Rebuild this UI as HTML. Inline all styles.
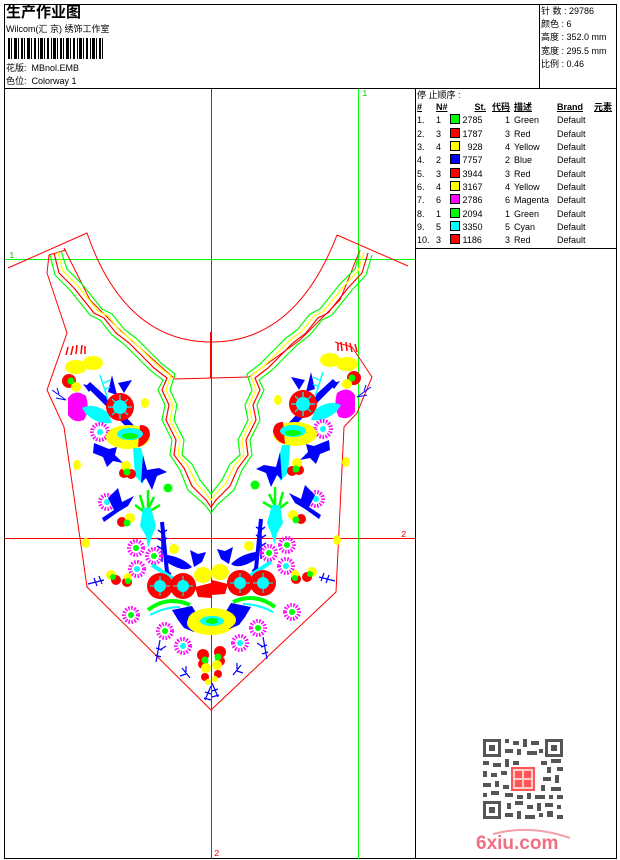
<!DOCTYPE html>
<html><head><meta charset="utf-8"><style>
*{margin:0;padding:0;box-sizing:border-box}
body{width:620px;height:860px;background:#fff;position:relative;overflow:hidden;font-family:"Liberation Sans","Noto Sans CJK SC",sans-serif;color:#000}
.a{position:absolute}
.t{font-size:9px;line-height:12px;white-space:nowrap}
table{border-collapse:collapse;font-size:9px}
td{height:13.3px;line-height:13px;padding:0;white-space:nowrap}
.sw{display:inline-block;width:10px;height:10px;border:1px solid #000;vertical-align:-1px}
</style></head><body>
<div class="a" style="left:4px;top:4px;width:613px;height:855px;border:1px solid #000"></div>
<div class="a" style="left:4px;top:88px;width:613px;border-top:1px solid #000"></div>
<div class="a" style="left:539px;top:4px;height:84px;border-left:1px solid #000"></div>
<div class="a" style="left:415px;top:88px;height:771px;border-left:1px solid #000"></div>
<div class="a" style="left:415px;top:248px;width:202px;border-top:1px solid #000"></div>
<div class="a" style="left:6px;top:3px;font-size:15px;font-weight:bold;line-height:18px;font-family:'WenQuanYi Zen Hei','Noto Sans CJK SC',sans-serif">生产作业图</div>
<div class="a t" style="left:6px;top:23px">Wilcom(汇 京) 绣饰工作室</div>
<svg class="a" style="left:8px;top:38px" width="100" height="21">
<g fill="#000">
<rect x="0" y="0" width="2" height="21"/><rect x="3" y="0" width="1" height="21"/><rect x="6" y="0" width="3" height="21"/><rect x="10" y="0" width="1" height="21"/><rect x="13" y="0" width="2" height="21"/><rect x="16" y="0" width="1" height="21"/><rect x="19" y="0" width="3" height="21"/><rect x="23" y="0" width="1" height="21"/><rect x="26" y="0" width="2" height="21"/><rect x="30" y="0" width="1" height="21"/><rect x="32" y="0" width="3" height="21"/><rect x="36" y="0" width="1" height="21"/><rect x="39" y="0" width="2" height="21"/><rect x="43" y="0" width="1" height="21"/><rect x="45" y="0" width="3" height="21"/><rect x="49" y="0" width="1" height="21"/><rect x="52" y="0" width="2" height="21"/><rect x="55" y="0" width="1" height="21"/><rect x="58" y="0" width="3" height="21"/><rect x="62" y="0" width="1" height="21"/><rect x="65" y="0" width="2" height="21"/><rect x="69" y="0" width="1" height="21"/><rect x="71" y="0" width="3" height="21"/><rect x="75" y="0" width="1" height="21"/><rect x="78" y="0" width="2" height="21"/><rect x="82" y="0" width="1" height="21"/><rect x="84" y="0" width="3" height="21"/><rect x="88" y="0" width="1" height="21"/><rect x="91" y="0" width="2" height="21"/><rect x="94" y="0" width="1" height="21"/>
</g></svg>
<div class="a t" style="left:6px;top:62px">花版:&nbsp; MBnol.EMB</div>
<div class="a t" style="left:6px;top:75px">色位:&nbsp; Colorway 1</div>
<div class="a t" style="left:541px;top:5px;line-height:13.2px">针 数 : 29786<br>颜色 : 6<br>高度 : 352.0 mm<br>宽度 : 295.5 mm<br>比例 : 0.46</div>
<div class="a t" style="left:417px;top:89px">停 止顺序 :</div>
<table class="a" style="left:417px;top:101px">
<tr style="font-weight:bold;text-decoration:underline"><td style="width:19px">#</td><td style="width:14px">N#</td><td style="width:36px;text-align:right">St.</td><td style="width:24px;text-align:right">代码</td><td style="width:47px;padding-left:4px">描述</td><td style="width:35px">Brand</td><td style="padding-left:2px">元素</td></tr>
<tr><td>1.</td><td>1</td><td><span class="sw" style="background:#0f0"></span> 2785</td><td style="text-align:right">1</td><td style="padding-left:4px">Green</td><td>Default</td><td></td></tr>
<tr><td>2.</td><td>3</td><td><span class="sw" style="background:#f00"></span> 1787</td><td style="text-align:right">3</td><td style="padding-left:4px">Red</td><td>Default</td><td></td></tr>
<tr><td>3.</td><td>4</td><td><span class="sw" style="background:#ff0"></span> &nbsp;&nbsp;928</td><td style="text-align:right">4</td><td style="padding-left:4px">Yellow</td><td>Default</td><td></td></tr>
<tr><td>4.</td><td>2</td><td><span class="sw" style="background:#00f"></span> 7757</td><td style="text-align:right">2</td><td style="padding-left:4px">Blue</td><td>Default</td><td></td></tr>
<tr><td>5.</td><td>3</td><td><span class="sw" style="background:#f00"></span> 3944</td><td style="text-align:right">3</td><td style="padding-left:4px">Red</td><td>Default</td><td></td></tr>
<tr><td>6.</td><td>4</td><td><span class="sw" style="background:#ff0"></span> 3167</td><td style="text-align:right">4</td><td style="padding-left:4px">Yellow</td><td>Default</td><td></td></tr>
<tr><td>7.</td><td>6</td><td><span class="sw" style="background:#f0f"></span> 2786</td><td style="text-align:right">6</td><td style="padding-left:4px">Magenta</td><td>Default</td><td></td></tr>
<tr><td>8.</td><td>1</td><td><span class="sw" style="background:#0f0"></span> 2094</td><td style="text-align:right">1</td><td style="padding-left:4px">Green</td><td>Default</td><td></td></tr>
<tr><td>9.</td><td>5</td><td><span class="sw" style="background:#0ff"></span> 3350</td><td style="text-align:right">5</td><td style="padding-left:4px">Cyan</td><td>Default</td><td></td></tr>
<tr><td>10.</td><td>3</td><td><span class="sw" style="background:#f00"></span> 1186</td><td style="text-align:right">3</td><td style="padding-left:4px">Red</td><td>Default</td><td></td></tr>
</table>

<svg class="a" style="left:0;top:0" width="415" height="860" shape-rendering="crispEdges">
<line x1="211.5" y1="89" x2="211.5" y2="859" stroke="#f00"/>
<line x1="5" y1="538.5" x2="415" y2="538.5" stroke="#f00"/>
<line x1="358.5" y1="89" x2="358.5" y2="859" stroke="#0f0"/>
<line x1="5" y1="259.5" x2="415" y2="259.5" stroke="#0f0"/>
<text x="9" y="258" font-size="9" fill="#0c0" font-family="Liberation Mono">1</text>
<text x="362" y="96" font-size="9" fill="#0c0" font-family="Liberation Mono">1</text>
<text x="401" y="537" font-size="9" fill="#f00" font-family="Liberation Mono">2</text>
<text x="214" y="856" font-size="9" fill="#f00" font-family="Liberation Mono">2</text>
<g shape-rendering="auto" fill="none" stroke="#f00" stroke-width="1">
<polyline points="8,268 87,233"/>
<polyline points="337,235 408,266"/>
<path d="M87 233 C110 300 150 342 211 342 C272 342 312 300 337 235"/>
<polyline points="66,250 49,255 47,273 67,333 47,390 64,427 87,587 211,710 336,592 344,427 357,413 372,377 352,347 335,342"/>
<polyline points="64,248 90,300 120,330 175,379 249,377 300,340 340,300 360,250"/>
<line x1="211" y1="332" x2="211" y2="378" stroke-width="2"/>
</g>
<g shape-rendering="auto" fill="none" stroke-width="1.2">
<polyline stroke="#0f0" points="50,255 55,275 70,290 78,300 90,315 100,320 112,335 125,345 140,360 150,370 163,380 158,390 165,405 162,420 172,440 170,455 180,470 188,490 205,505 211,513 217,505 234,490 242,470 252,455 250,440 260,420 257,405 264,390 259,380 272,370 282,360 297,345 310,335 322,320 332,315 344,300 352,290 366,275 372,255"/>
<polyline stroke="#f00" points="54,253 59,273 74,288 82,298 94,313 104,318 116,333 129,343 144,358 154,368 167,378 162,390 169,405 166,420 176,440 174,455 184,468 192,486 206,500 211,507 216,500 230,486 238,468 248,455 246,440 256,420 253,405 260,390 255,378 268,368 278,358 293,343 306,333 318,318 328,313 340,298 348,288 362,273 368,253"/>
<polyline stroke="#ff0" points="58,252 63,271 78,286 86,296 98,311 108,316 120,331 133,341 148,356 158,366 171,376 166,390 173,405 170,420 180,440 178,455 188,466 196,483 207,495 211,500 215,495 226,483 234,466 244,455 242,440 252,420 249,405 256,390 251,376 264,366 274,356 289,341 302,331 314,316 324,311 336,296 344,286 358,271 364,252"/>
<polyline stroke="#0f0" points="61,251 67,269 82,284 90,294 102,309 112,314 124,329 137,339 152,354 162,364 175,374 170,390 177,405 174,420 184,440 182,455 192,464 200,480 208,490 211,494 214,490 222,480 230,464 240,455 238,440 248,420 245,405 252,390 247,374 260,364 270,354 285,339 298,329 310,314 320,309 332,294 340,284 355,269 360,251"/>
</g>
<defs>
<g id="half">
<g stroke="#f00" stroke-width="1.5"><line x1="66" y1="355" x2="68" y2="347"/><line x1="71" y1="355" x2="73" y2="346"/><line x1="76" y1="354" x2="77" y2="345"/><line x1="81" y1="354" x2="82" y2="345"/><line x1="85" y1="354" x2="85" y2="346"/></g>
<ellipse cx="76" cy="367" rx="11" ry="7" fill="#ff0"/><ellipse cx="93" cy="363" rx="10" ry="7" fill="#ff0"/>
<path d="M90 382 L112 402 L140 432 L135 436 L108 408 L86 386Z" fill="#00f"/>
<path d="M112 375 l5 20 -9 -3z M118 383 l14 -3 -8 13z M93 387 l-10 -3 6 8z" fill="#00f"/>
<path d="M100 375 l8 25 M104 383 l6 -3 M104 390 l6 -3" stroke="#0ff" stroke-width="1.5" fill="none"/>
<path d="M52 390 l14 10 M56 398 l10 2 M57 388 l2 6" stroke="#00f" fill="none"/>
<circle cx="69" cy="381" r="7" fill="#f00"/><circle cx="76" cy="387" r="5" fill="#ff0"/><circle cx="71" cy="381" r="3.5" fill="#0f0"/>
<path d="M68 398 Q75 388 86 396 Q90 410 84 420 Q74 424 68 415Z" fill="#f0f"/>
<circle cx="120" cy="407" r="14" fill="#f00"/><circle cx="120" cy="407" r="7" fill="#0ff"/>
<path d="M120 395 L120 419 M108 407 L132 407 M112 399 L128 415 M128 399 L112 415" stroke="#0ff" stroke-width="1.2"/>
<path d="M82 408 Q95 402 108 413 L112 423 Q98 425 86 414Z" fill="#0ff"/>
<circle cx="100" cy="432" r="8" fill="none" stroke="#f0f" stroke-dasharray="1.5 1.5" stroke-width="4"/><circle cx="100" cy="432" r="3" fill="#0ff"/>
<ellipse cx="128" cy="437" rx="22" ry="12" fill="#ff0"/><path d="M140 425 q10 0 10 10 q-3 10 -12 12z" fill="#f00"/>
<ellipse cx="130" cy="434" rx="13" ry="6" fill="#0ff"/><ellipse cx="130" cy="436" rx="8" ry="3" fill="#0f0"/>
<path d="M94 443 l15 6 8 -2 -2 8 8 8 -10 -2 -6 6 -4 -10 -10 -4z" fill="#00f"/>
<path d="M133 448 l8 0 5 20 -3 16 -8 -8z" fill="#0ff"/>
<path d="M143 455 l4 15 12 -2 8 4 -10 4 -5 14 -6 -12 -5 5z" fill="#00f"/>
<circle cx="124" cy="473" r="5" fill="#f00"/><circle cx="131" cy="474" r="5" fill="#f00"/><circle cx="126" cy="466" r="5" fill="#ff0"/><circle cx="127" cy="472" r="3.5" fill="#0f0"/>
<ellipse cx="77" cy="465" rx="4" ry="5" fill="#ff0"/><circle cx="168" cy="488" r="4.5" fill="#0f0"/><ellipse cx="145" cy="403" rx="4" ry="5" fill="#ff0"/>
<circle cx="107" cy="502" r="7" fill="none" stroke="#f0f" stroke-dasharray="1.5 1.5" stroke-width="4"/><circle cx="107" cy="502" r="3" fill="#0ff"/>
<path d="M118 488 l4 14 12 -6 -6 10 -10 6 -14 10 -2 -4 12 -8 -6 -12z" fill="#00f"/>
<circle cx="122" cy="522" r="5" fill="#f00"/><circle cx="130" cy="518" r="5" fill="#ff0"/><circle cx="127" cy="523" r="3.5" fill="#0f0"/>
<path d="M140 495 l4 15 M148 490 l0 18 M154 497 l-6 12 M160 505 l-10 6 M135 505 l8 6" stroke="#0f0" stroke-width="2.5" fill="none"/>
<path d="M143 508 l8 0 5 18 -4 10 -4 12 -2 -12 -6 -10z" fill="#0ff"/>
<path d="M162 522 l0 40 M158 530 l4 3 M157 538 l5 3 M157 546 l5 3 M167 530 l-5 3 M167 538 l-5 3" stroke="#00f" stroke-width="1.5" fill="none"/>
<ellipse cx="86" cy="543" rx="4" ry="5" fill="#ff0"/><ellipse cx="174" cy="549" rx="5" ry="5" fill="#ff0"/>
<circle cx="136" cy="548" r="7" fill="none" stroke="#f0f" stroke-dasharray="1.5 1.5" stroke-width="4"/><circle cx="136" cy="548" r="3" fill="#0f0"/>
<circle cx="154" cy="556" r="7" fill="none" stroke="#f0f" stroke-dasharray="1.5 1.5" stroke-width="4"/><circle cx="154" cy="556" r="3" fill="#0f0"/>
<circle cx="137" cy="569" r="7" fill="none" stroke="#f0f" stroke-dasharray="1.5 1.5" stroke-width="4"/><circle cx="137" cy="569" r="3" fill="#0ff"/>
<path d="M162 522 L167 572 L170 575" stroke="#00f" stroke-width="4" fill="none"/>
<path d="M167 555 q15 2 25 12 q-8 6 -24 -4z M190 550 l8 4 8 -2 -4 10 -8 5z" fill="#00f"/>
<path d="M152 565 L175 580" stroke="#0ff" stroke-width="4"/>
<circle cx="160" cy="586" r="13" fill="#f00"/><circle cx="160" cy="586" r="6" fill="#0ff"/>
<circle cx="183" cy="586" r="13" fill="#f00"/><circle cx="183" cy="586" r="6" fill="#0ff"/>
<path d="M150 586 L170 586 M160 576 L160 596 M173 586 L193 586 M183 576 L183 596" stroke="#0ff" stroke-width="1"/>
<ellipse cx="203" cy="575" rx="9" ry="8" fill="#ff0"/>
<path d="M195 587 L211 583 L211 598 L198 597Z" fill="#f00"/>
<circle cx="111" cy="575" r="5" fill="#ff0"/><circle cx="116" cy="580" r="5" fill="#f00"/><circle cx="113" cy="577" r="3" fill="#0f0"/>
<circle cx="127" cy="582" r="5" fill="#f00"/><circle cx="128" cy="577" r="4" fill="#ff0"/><circle cx="128" cy="581" r="3" fill="#0f0"/>
<path d="M88 584 l16 -4 M94 578 l3 8 M99 576 l3 8" stroke="#00f" stroke-width="1.2" fill="none"/>
<path d="M148 610 q20 -15 42 -5" stroke="#0f0" stroke-width="4" fill="none"/><path d="M150 615 q15 -8 30 -8" stroke="#0ff" stroke-width="2" fill="none"/>
<path d="M172 610 l20 -4 6 10 -4 16 -10 -4 -6 -8z" fill="#00f"/>
<ellipse cx="211" cy="623" rx="24" ry="12" fill="#ff0"/><ellipse cx="211" cy="624" rx="12" ry="5" fill="#0ff"/><ellipse cx="211" cy="624" rx="6" ry="3" fill="#0f0"/>
<circle cx="165" cy="631" r="7" fill="none" stroke="#f0f" stroke-dasharray="1.5 1.5" stroke-width="4"/><circle cx="165" cy="631" r="3" fill="#0f0"/>
<circle cx="183" cy="646" r="7" fill="none" stroke="#f0f" stroke-dasharray="1.5 1.5" stroke-width="4"/><circle cx="183" cy="646" r="3" fill="#0ff"/>
<circle cx="131" cy="615" r="7" fill="none" stroke="#f0f" stroke-dasharray="1.5 1.5" stroke-width="4"/><circle cx="131" cy="615" r="3" fill="#0f0"/>
<path d="M160 640 l-4 22 M156 648 l6 2 M155 655 l6 2 M166 646 l-6 4" stroke="#00f" stroke-width="1.2" fill="none"/>
<path d="M182 668 l8 10 M180 676 l6 -2 M186 672 l0 -6" stroke="#00f" stroke-width="1.2" fill="none"/>
<circle cx="203" cy="655" r="6" fill="#f00"/><circle cx="203" cy="664" r="5" fill="#f00"/><circle cx="206" cy="668" r="5" fill="#ff0"/><circle cx="205" cy="660" r="3.5" fill="#0f0"/>
<circle cx="205" cy="677" r="4" fill="#f00"/><circle cx="208" cy="682" r="3" fill="#ff0"/>
<path d="M211 686 l-6 14 M205 692 l6 2 M204 698 l7 2" stroke="#00f" stroke-width="1.2" fill="none"/>
</g>
</defs>
<g shape-rendering="auto">
<use href="#half"/>
<use href="#half" transform="translate(423,-3) scale(-1,1)"/>
</g>
</svg>

<svg class="a" style="left:481px;top:737px" width="84" height="84" shape-rendering="crispEdges">
<rect width="84" height="84" fill="#fff"/>
<g fill="#555">
<rect x="2" y="2" width="18" height="18"/><rect x="64" y="2" width="18" height="18"/><rect x="2" y="64" width="18" height="18"/>
</g>
<g fill="#fff"><rect x="5" y="5" width="12" height="12"/><rect x="67" y="5" width="12" height="12"/><rect x="5" y="67" width="12" height="12"/></g>
<g fill="#555"><rect x="8" y="8" width="6" height="6"/><rect x="70" y="8" width="6" height="6"/><rect x="8" y="70" width="6" height="6"/>
<path d="M24 2h4v4h-4zM32 4h6v4h-6zM42 2h4v8h-4zM50 4h8v4h-8zM24 12h8v4h-8zM36 12h4v6h-4zM46 14h10v4h-10zM58 12h4v4h-4z
M2 24h6v4h-6zM12 26h8v4h-8zM24 22h4v8h-4zM32 24h6v4h-6zM60 24h6v4h-6zM70 22h10v4h-10zM66 30h4v6h-4zM76 30h6v4h-6z
M2 34h4v6h-4zM10 36h6v4h-6zM20 34h6v4h-6zM62 40h8v4h-8zM74 38h4v8h-4zM2 46h8v4h-8zM14 44h4v6h-4zM22 48h6v4h-6zM60 48h4v6h-4zM70 50h10v4h-10z
M2 56h4v4h-4zM10 54h8v4h-8zM24 56h8v4h-8zM36 58h6v4h-6zM46 56h4v6h-4zM54 58h10v4h-10zM68 58h4v4h-4zM76 58h6v4h-6z
M26 66h4v6h-4zM34 64h8v4h-8zM46 68h6v4h-6zM56 66h4v8h-4zM64 66h8v4h-8zM76 68h4v4h-4zM24 76h8v4h-8zM36 74h4v8h-4zM44 78h10v4h-10zM58 76h4v4h-4zM66 74h6v6h-6zM76 78h6v4h-6z"/></g>
<rect x="30" y="30" width="24" height="24" fill="#f55"/>
<rect x="32" y="32" width="20" height="20" fill="#fcc"/>
<g fill="#f55"><rect x="34" y="34" width="7" height="7"/><rect x="43" y="34" width="7" height="7"/><rect x="34" y="43" width="7" height="7"/><rect x="43" y="43" width="7" height="7"/></g>
</svg>
<svg class="a" style="left:475px;top:826px" width="100" height="28">
<path d="M18 8 Q55 -2 95 12" stroke="#f5a0a8" stroke-width="2" fill="none"/>
<text x="1" y="23" font-size="19" font-weight="bold" fill="#f07080" font-family="Liberation Sans">6xiu.com</text>
</svg>
</body></html>
